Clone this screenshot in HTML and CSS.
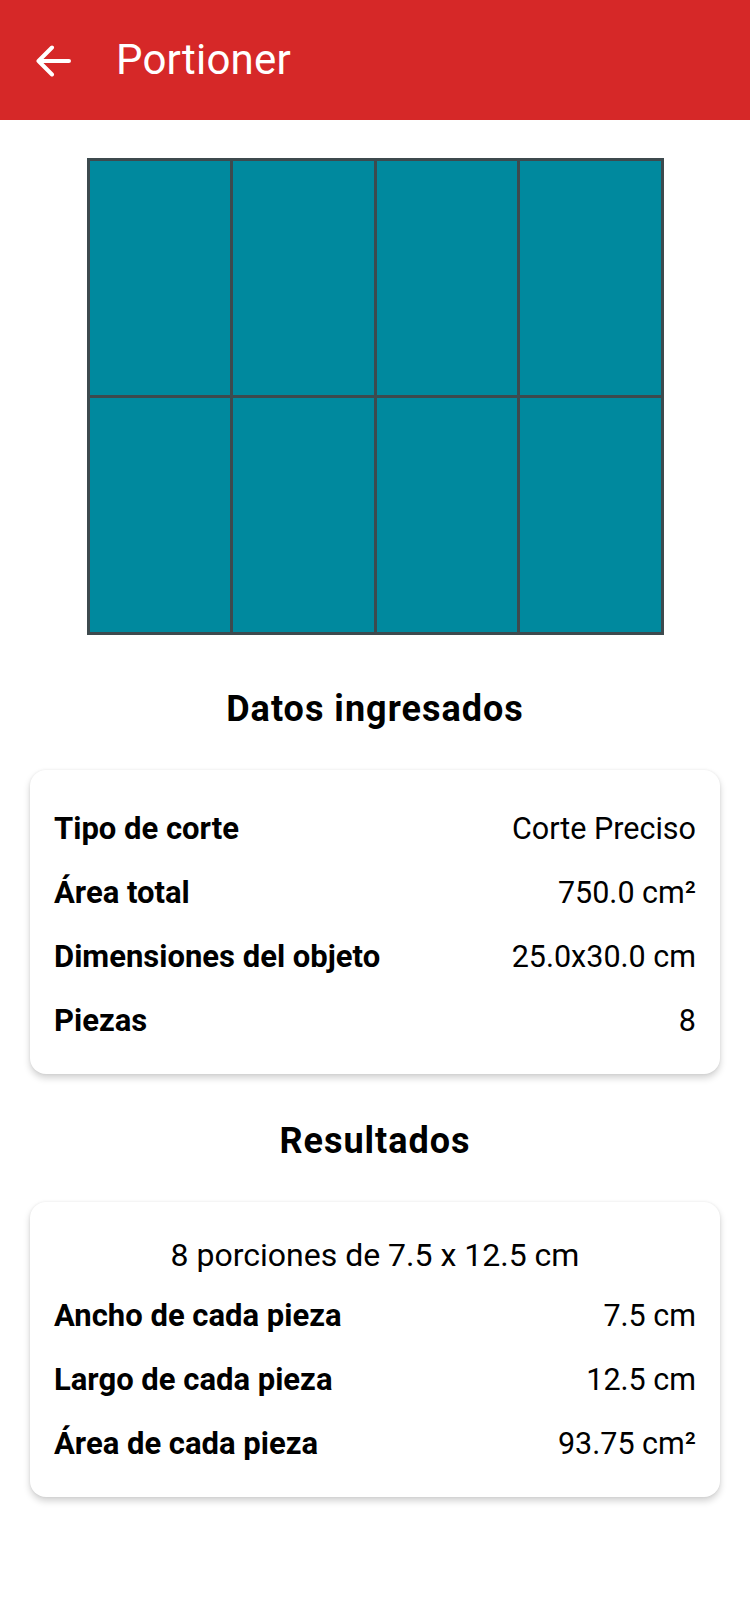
FILE: index.html
```html
<!DOCTYPE html>
<html lang="es">
<head>
<meta charset="utf-8">
<title>Portioner</title>
<link rel="stylesheet" href="styles.css">
</head>
<body>
<header class="appbar">
  <svg class="back" width="36" height="32" viewBox="0 0 36 32" aria-hidden="true">
    <path d="M2.5 16H33 M16 2.5L2.5 16L16 29.5" fill="none" stroke="#fff" stroke-width="4" stroke-linecap="round" stroke-linejoin="round"/>
  </svg>
  <h1 class="title">Portioner</h1>
</header>
<main class="content">
  <div class="board">
    <div class="cell"></div><div class="cell"></div><div class="cell"></div><div class="cell"></div>
    <div class="cell"></div><div class="cell"></div><div class="cell"></div><div class="cell"></div>
  </div>

  <h2 class="section-title first">Datos ingresados</h2>
  <section class="card card-data">
    <div class="row"><span class="label">Tipo de corte</span><span class="value">Corte Preciso</span></div>
    <div class="row"><span class="label">Área total</span><span class="value">750.0 cm²</span></div>
    <div class="row"><span class="label">Dimensiones del objeto</span><span class="value">25.0x30.0 cm</span></div>
    <div class="row"><span class="label">Piezas</span><span class="value">8</span></div>
  </section>

  <h2 class="section-title second">Resultados</h2>
  <section class="card card-results">
    <div class="summary">8 porciones de 7.5 x 12.5 cm</div>
    <div class="row"><span class="label">Ancho de cada pieza</span><span class="value">7.5 cm</span></div>
    <div class="row"><span class="label">Largo de cada pieza</span><span class="value">12.5 cm</span></div>
    <div class="row"><span class="label">Área de cada pieza</span><span class="value">93.75 cm²</span></div>
  </section>
</main>
</body>
</html>
```
FILE: styles.css
```css
* { box-sizing: border-box; }
html, body { margin: 0; padding: 0; background: #ffffff; }
body {
  font-family: Roboto, "Liberation Sans", Arial, sans-serif;
  color: #000;
  width: 750px;
}
.appbar {
  height: 120px;
  background: #d62828;
  display: flex;
  align-items: center;
  padding-left: 36px;
}
.back { display: block; margin-top: 1px; }
.title {
  margin: 0 0 0 44px;
  color: #fff;
  font-weight: 400;
  font-size: 42px;
  line-height: 48px;
  letter-spacing: 0.2px;
}
.content {
  display: flex;
  flex-direction: column;
  align-items: center;
  padding-top: 38px;
  padding-bottom: 60px;
}
.board {
  width: 577px;
  height: 477px;
  background: #3d4a4e;
  padding: 3px;
  display: grid;
  grid-template-columns: repeat(4, 1fr);
  grid-template-rows: repeat(2, 1fr);
  gap: 3px;
}
.cell { background: #00899e; }
.section-title {
  margin: 0;
  font-size: 36px;
  line-height: 40px;
  letter-spacing: 1px;
  font-weight: 700;
  text-align: center;
}
.section-title.first { margin-top: 54px; margin-bottom: 41px; }
.section-title.second { margin-top: 47px; margin-bottom: 41px; }
.card {
  width: 690px;
  background: #fff;
  border-radius: 16px;
  box-shadow: 0 4px 7px rgba(0,0,0,0.18), 0 0 3px rgba(0,0,0,0.07);
  padding-left: 24px;
  padding-right: 24px;
}
.card-data { padding-top: 26px; padding-bottom: 22px; }
.card-results { padding-top: 25px; padding-bottom: 22px; }
.row {
  display: flex;
  justify-content: space-between;
  align-items: center;
  height: 64px;
}
.label { font-weight: 700; font-size: 31px; }
.value { font-weight: 400; font-size: 30.5px; }
.summary {
  text-align: center;
  font-size: 32px;
  line-height: 56px;
}
```
